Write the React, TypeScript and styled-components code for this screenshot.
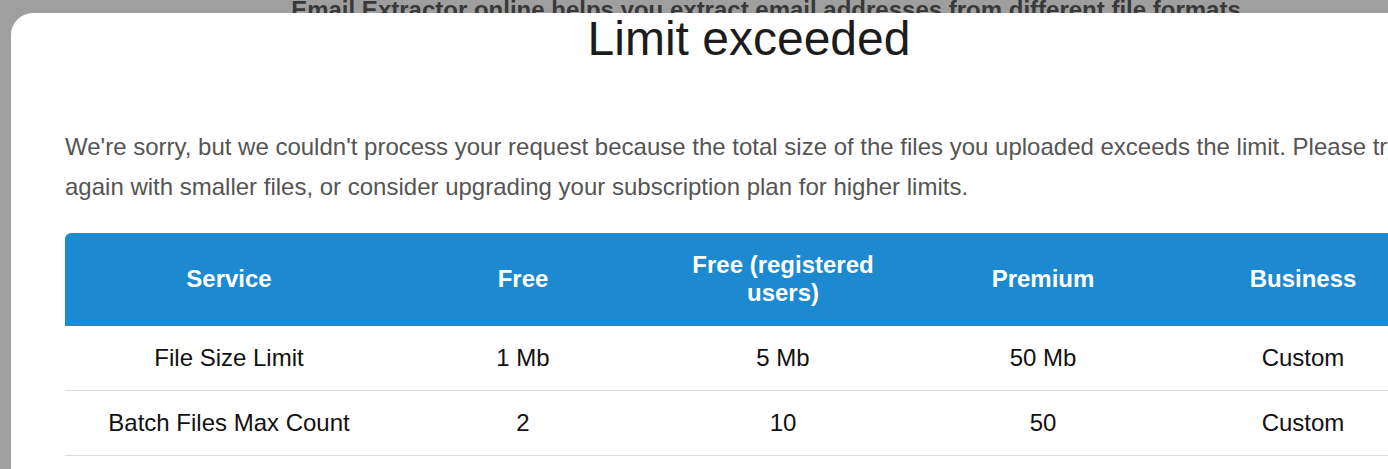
import React from 'react';
import styled, { createGlobalStyle } from 'styled-components';

const GlobalStyle = createGlobalStyle`
  html, body {
    margin: 0;
    padding: 0;
    background: #9f9f9f;
    font-family: "Liberation Sans", Arial, sans-serif;
    overflow: hidden;
  }
`;

const Page = styled.div`
  position: relative;
  width: 1388px;
  height: 469px;
  overflow: hidden;
`;

const BackdropHeading = styled.h2`
  margin: 0;
  text-align: center;
  font-size: 24px;
  font-weight: 700;
  line-height: 28px;
  color: #393939;
  width: 1532px;
  position: absolute;
  top: -4px;
  left: 0;
`;

const Modal = styled.div`
  position: absolute;
  top: 13px;
  left: 11px;
  width: 1476px;
  height: 600px;
  box-sizing: border-box;
  padding: 0 54px;
  background: #fff;
  border-radius: 22px 22px 0 0;
`;

const Title = styled.h1`
  margin: 0;
  text-align: center;
  font-size: 48px;
  font-weight: 400;
  line-height: 52px;
  color: #1c1c1c;
`;

const Message = styled.p`
  margin: 62px 0 0;
  font-size: 24px;
  line-height: 40px;
  color: #555;
`;

const Table = styled.div`
  margin-top: 26px;
  display: grid;
  grid-template-columns: 328px repeat(4, 260px);
`;

const HeadCell = styled.div<{ $first?: boolean }>`
  background: #1c89d0;
  color: #fff;
  font-weight: 700;
  font-size: 24px;
  line-height: 28px;
  padding: 18px 30px 19px;
  min-height: 56px;
  display: flex;
  align-items: center;
  justify-content: center;
  text-align: center;
  border-top-left-radius: ${(p) => (p.$first ? '6px' : '0')};
`;

const Cell = styled.div`
  color: #111;
  font-size: 24px;
  line-height: 28px;
  padding: 18px 10px;
  text-align: center;
  border-bottom: 1px solid #ddd;
`;

const headers = ['Service', 'Free', 'Free (registered users)', 'Premium', 'Business'];
const rows = [
  ['File Size Limit', '1 Mb', '5 Mb', '50 Mb', 'Custom'],
  ['Batch Files Max Count', '2', '10', '50', 'Custom'],
];

export default function App() {
  return (
    <Page>
      <GlobalStyle />
      <BackdropHeading>Email Extractor online helps you extract email addresses from different file formats</BackdropHeading>
      <Modal>
        <Title>Limit exceeded</Title>
        <Message>
          We're sorry, but we couldn't process your request because the total size of the files you uploaded exceeds
          the limit. Please try again with smaller files, or consider upgrading your subscription plan for higher
          limits.
        </Message>
        <Table>
          {headers.map((h, i) => (
            <HeadCell key={h} $first={i === 0}>
              {h}
            </HeadCell>
          ))}
          {rows.map((r) => r.map((c, i) => <Cell key={r[0] + i}>{c}</Cell>))}
        </Table>
      </Modal>
    </Page>
  );
}
